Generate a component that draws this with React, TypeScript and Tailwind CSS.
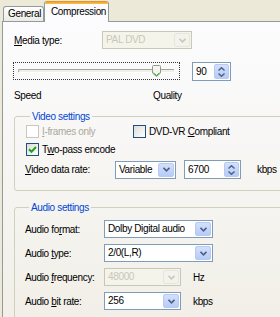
import React from "react"

const font = { fontFamily: '"Liberation Sans", Arial, sans-serif' }

// underline one letter as Windows does for access keys
function Label({ text, u, disabled = false }: { text: string; u: number; disabled?: boolean }) {
    return (
        <span className={`whitespace-nowrap ${disabled ? "text-[#aca899]" : "text-black"}`}>
            {text.slice(0, u)}
            <span className="underline underline-offset-[1px]">{text.slice(u, u + 1)}</span>
            {text.slice(u + 1)}
        </span>
    )
}

function Chevron({ disabled }: { disabled?: boolean }) {
    return (
        <svg width="7" height="5" viewBox="0 0 7 5">
            <path d="M0.5 0.8 L3.5 3.8 L6.5 0.8" fill="none" stroke={disabled ? "#c9c7ba" : "#4d6185"} strokeWidth="1.6" />
        </svg>
    )
}

function ComboBox({ value, width, disabled = false }: { value: string; width: string; disabled?: boolean }) {
    return (
        <div className={`${width} h-[18px] flex border ${disabled ? "border-[#c9c7ba] bg-[#f5f4ea]" : "border-[#7f9db9] bg-white"}`}>
            <div className={`flex-1 pl-[3px] leading-[16px] whitespace-nowrap overflow-hidden ${disabled ? "text-[#c9c7ba]" : "text-black"}`}>
                {value}
            </div>
            <div className={`w-[16px] m-[1px] rounded-[2px] flex items-center justify-center border ${disabled ? "border-[#e8e6dc] bg-[#f3f2ec]" : "border-[#b9c9ef] bg-gradient-to-b from-[#d3e0fd] to-[#b7cbf6]"}`}>
                <Chevron disabled={disabled} />
            </div>
        </div>
    )
}

function SpinBox({ value, width }: { value: string; width: string }) {
    return (
        <div className={`${width} h-[19px] flex border border-[#7f9db9] bg-white`}>
            <div className="flex-1 pl-[3px] leading-[17px]">{value}</div>
            <div className="w-[15px] m-[1px] rounded-[2px] flex flex-col items-center justify-center gap-[2px] border border-[#b9c9ef] bg-gradient-to-b from-[#d3e0fd] to-[#b7cbf6]">
                <svg width="7" height="4" viewBox="0 0 7 4">
                    <path d="M0.5 3.5 L3.5 0.7 L6.5 3.5" fill="none" stroke="#4d6185" strokeWidth="1.4" />
                </svg>
                <svg width="7" height="4" viewBox="0 0 7 4">
                    <path d="M0.5 0.5 L3.5 3.3 L6.5 0.5" fill="none" stroke="#4d6185" strokeWidth="1.4" />
                </svg>
            </div>
        </div>
    )
}

function CheckBox({ checked = false, disabled = false }: { checked?: boolean; disabled?: boolean }) {
    return (
        <div className={`w-[13px] h-[13px] shrink-0 border flex items-center justify-center ${disabled ? "border-[#cac8bb] bg-white" : "border-[#1c5180] bg-gradient-to-br from-[#dcdcd7] to-white"}`}>
            {checked && (
                <svg width="9" height="9" viewBox="0 0 9 9">
                    <path d="M1 4.2 L3.5 6.7 L8 2" fill="none" stroke="#21a121" strokeWidth="2" />
                </svg>
            )}
        </div>
    )
}

function QualitySlider() {
    return (
        <div className="w-[167px] h-[18px] border border-dotted border-[#333] flex items-center px-[4px]">
            <div className="relative w-full h-[4px] rounded-[2px] border border-t-[#a4a29a] border-l-[#a4a29a] border-b-white border-r-white bg-[#f0efe8]">
                {/* thumb */}
                <svg className="absolute left-[133px] -top-[5px]" width="9" height="12" viewBox="0 0 9 12">
                    <path d="M0.5 1.5 Q0.5 0.5 1.5 0.5 L7.5 0.5 Q8.5 0.5 8.5 1.5 L8.5 8 L4.5 11.5 L0.5 8 Z" fill="#f5f5f0" stroke="#8d9c86" />
                    <path d="M1.5 8 L4.5 10.5 L7.5 8" fill="none" stroke="#21a121" strokeWidth="1" />
                </svg>
            </div>
        </div>
    )
}

export default function App() {
    return (
        <div className="w-[280px] h-[317px] overflow-hidden bg-[#ece9d8] text-[10px] leading-[13px] tracking-[-0.35px] text-black" style={font}>
            {/* tab strip */}
            <div className="h-[21px] flex items-end pl-[3px]">
                <div className="h-[15px] w-[41px] pl-[4px] border border-b-0 border-[#919b9c] rounded-t-[3px] bg-gradient-to-b from-white to-[#ecebe6] leading-[14px]">
                    General
                </div>
                <div className="h-[21px] -mb-px relative z-10 w-[65px] flex flex-col border-x border-[#919b9c] rounded-t-[3px] bg-[#fcfcfe] overflow-hidden">
                    <div className="h-[3px] bg-gradient-to-b from-[#e68b2c] to-[#ffc73c]" />
                    <div className="leading-[14px] pl-[6px] pt-[1px]">Compression</div>
                </div>
            </div>

            {/* tab page */}
            <div className="ml-[2px] w-[300px] h-[296px] border-l border-t border-[#919b9c] bg-gradient-to-b from-[#fcfcfe] to-[#f1efe7]">
                <div className="pt-[9px] pl-[11px] flex items-center">
                    <div className="w-[88px]">
                        <Label text="Media type:" u={0} />
                    </div>
                    <ComboBox value="PAL DVD" width="w-[90px]" disabled />
                </div>

                <div className="mt-[13px] pl-[10px] flex items-start gap-[12px]">
                    <QualitySlider />
                    <SpinBox value="90" width="w-[39px]" />
                </div>

                <div className="mt-[8px] pl-[11px] flex">
                    <span className="w-[139px]">Speed</span>
                    <span>Quality</span>
                </div>

                {/* video group */}
                <fieldset className="mt-[8px] ml-[11px] w-[290px] border border-[#d0d0bf] rounded-[3px] pl-[11px] pb-[11px]">
                    <legend className="ml-[4px] px-[2px] text-[#0046d5]">Video settings</legend>
                    <div className="mt-[2px] flex items-center">
                        <div className="w-[107px] flex items-center gap-[3px]">
                            <CheckBox disabled />
                            <Label text="I-frames only" u={0} disabled />
                        </div>
                        <div className="flex items-center gap-[3px]">
                            <CheckBox />
                            <Label text="DVD-VR Compliant" u={7} />
                        </div>
                    </div>
                    <div className="mt-[5px] flex items-center gap-[3px]">
                        <CheckBox checked />
                        <Label text="Two-pass encode" u={1} />
                    </div>
                    <div className="mt-[4px] -ml-[1px] flex items-center">
                        <div className="w-[90px]">
                            <Label text="Video data rate:" u={0} />
                        </div>
                        <ComboBox value="Variable" width="w-[61px]" />
                        <div className="ml-[8px]">
                            <SpinBox value="6700" width="w-[57px]" />
                        </div>
                        <span className="ml-[16px]">kbps</span>
                    </div>
                </fieldset>

                {/* audio group */}
                <fieldset className="mt-[10px] ml-[11px] w-[290px] border border-[#d0d0bf] rounded-[3px] pl-[10px] pb-[11px]">
                    <legend className="ml-[4px] px-[2px] text-[#0046d5]">Audio settings</legend>
                    <div className="mt-[6px] flex items-center">
                        <div className="w-[79px]">
                            <Label text="Audio format:" u={8} />
                        </div>
                        <ComboBox value="Dolby Digital audio" width="w-[109px]" />
                    </div>
                    <div className="mt-[6px] flex items-center">
                        <div className="w-[79px]">
                            <Label text="Audio type:" u={6} />
                        </div>
                        <ComboBox value="2/0(L,R)" width="w-[109px]" />
                    </div>
                    <div className="mt-[6px] flex items-center">
                        <div className="w-[79px]">
                            <Label text="Audio frequency:" u={6} />
                        </div>
                        <ComboBox value="48000" width="w-[77px]" disabled />
                        <span className="ml-[12px]">Hz</span>
                    </div>
                    <div className="mt-[6px] flex items-center">
                        <div className="w-[79px]">
                            <Label text="Audio bit rate:" u={6} />
                        </div>
                        <ComboBox value="256" width="w-[77px]" />
                        <span className="ml-[12px]">kbps</span>
                    </div>
                </fieldset>
            </div>
        </div>
    )
}
